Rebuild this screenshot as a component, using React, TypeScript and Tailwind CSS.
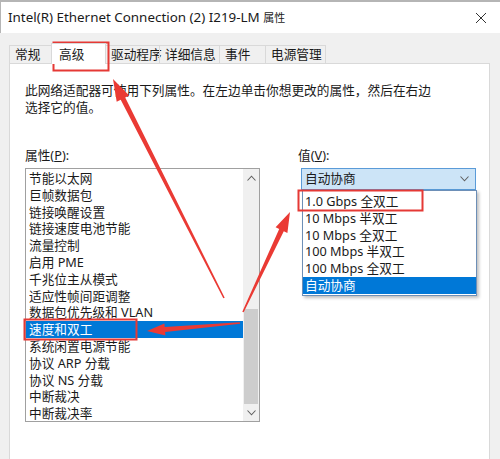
import React from 'react';

const font = { fontFamily: '"Noto Sans", "Noto Sans CJK SC", sans-serif' };

const tabs = [
  { label: '常规', w: 'w-[43px]' },
  { label: '高级', w: 'w-[55px]' },
  { label: '驱动程序', w: 'w-[55px]' },
  { label: '详细信息', w: 'w-[61px]' },
  { label: '事件', w: 'w-[47px]' },
  { label: '电源管理', w: 'w-[61px]' },
];

const properties = [
  '节能以太网',
  '巨帧数据包',
  '链接唤醒设置',
  '链接速度电池节能',
  '流量控制',
  '启用 PME',
  '千兆位主从模式',
  '适应性帧间距调整',
  '数据包优先级和 VLAN',
  '速度和双工',
  '系统闲置电源节能',
  '协议 ARP 分载',
  '协议 NS 分载',
  '中断裁决',
  '中断裁决率',
];

const values = ['1.0 Gbps 全双工', '10 Mbps 半双工', '10 Mbps 全双工', '100 Mbps 半双工', '100 Mbps 全双工', '自动协商'];

// tapered arrow from tail to tip
function arrow(tx: number, ty: number, hx: number, hy: number, w0: number, w1: number, hl: number, hw: number) {
  const dx = hx - tx;
  const dy = hy - ty;
  const len = Math.hypot(dx, dy);
  const ux = dx / len;
  const uy = dy / len;
  const nx = -uy;
  const ny = ux;
  const bx = hx - ux * hl;
  const by = hy - uy * hl;
  const p = (x: number, y: number) => `${x.toFixed(1)},${y.toFixed(1)}`;
  return [
    p(tx + (nx * w0) / 2, ty + (ny * w0) / 2),
    p(bx + (nx * w1) / 2, by + (ny * w1) / 2),
    p(bx + (nx * hw) / 2, by + (ny * hw) / 2),
    p(hx, hy),
    p(bx - (nx * hw) / 2, by - (ny * hw) / 2),
    p(bx - (nx * w1) / 2, by - (ny * w1) / 2),
    p(tx - (nx * w0) / 2, ty - (ny * w0) / 2),
  ].join(' ');
}

const Chevron: React.FC<{ up?: boolean }> = ({ up }) => (
  <svg width="9" height="6" viewBox="0 0 9 6" className="block">
    <path d={up ? 'M0.5 5.5 L4.5 1.2 L8.5 5.5' : 'M0.5 0.5 L4.5 4.8 L8.5 0.5'} fill="none" stroke="#606060" strokeWidth="1.1" />
  </svg>
);

export default function App() {
  return (
    <div className="relative w-[500px] h-[459px] overflow-hidden bg-[#f0f0f0] text-[#1a1a1a]" style={font}>
      {/* title bar */}
      <div className="h-[33px] bg-white border-t-2 border-l border-[#b5b5b5] flex items-center justify-between pl-[7px] pr-[13px]">
        <span className="text-[13.4px]">
          Intel(R) Ethernet Connection (2) I219-LM <span className="text-[11px]">属性</span>
        </span>
        <svg width="12" height="12" viewBox="0 0 12 12">
          <path d="M1 1 L11 11 M11 1 L1 11" stroke="#333" strokeWidth="1" />
        </svg>
      </div>

      {/* tabs */}
      <div className="flex items-end h-[30px] pl-[10px] text-[12.7px]">
        {tabs.map((t, i) =>
          i === 1 ? (
            <div key={t.label} className={`${t.w} h-[21px] pl-[7px] bg-white border border-b-0 border-[#d9d9d9] flex items-start pt-[1px] relative z-10 -mb-px -ml-px`}>
              {t.label}
            </div>
          ) : (
            <div key={t.label} className={`${t.w} h-[18px] pl-[5px] border border-b-0 border-[#d9d9d9] flex items-center -ml-px whitespace-nowrap`}>
              {t.label}
            </div>
          )
        )}
      </div>

      {/* panel */}
      <div className="ml-[9px] w-[481px] h-[400px] bg-white border border-[#d9d9d9] pl-[15px] pt-[18px] text-[12.7px]">
        <p className="leading-[17px] w-[410px]">此网络适配器可使用下列属性。在左边单击你想更改的属性，然后在右边选择它的值。</p>

        <div className="flex mt-[31px]">
          <div className="w-[235px]">
            <div className="leading-[17px] mb-[4px]">属性(<span className="underline">P</span>):</div>
            <div className="h-[254px] border border-[#a0a0a0] flex">
              <div className="flex-1 pt-[1px]">
                {properties.map((p, i) => (
                  <div key={p} className={`leading-[16.8px] pl-[3px] ${i === 9 ? 'bg-[#0078d7] text-white' : ''}`}>
                    {p}
                  </div>
                ))}
              </div>
              <div className="w-[16px] bg-[#f0f0f0] flex flex-col">
                <div className="h-[17px] flex items-center justify-center">
                  <Chevron up />
                </div>
                <div className="flex-1 flex flex-col justify-end">
                  <div className="h-[95px] mx-[1px] bg-[#cdcdcd]" />
                </div>
                <div className="h-[17px] flex items-center justify-center">
                  <Chevron />
                </div>
              </div>
            </div>
          </div>

          <div className="ml-[38px]">
            <div className="leading-[17px] mb-[4px]">值(<span className="underline">V</span>):</div>
            <div className="relative ml-[3px] w-[175px]">
              <div className="h-[22px] bg-[#cce4f7] border border-[#5a9bd8] flex items-center justify-between pl-[3px] pr-[6px]">
                <span>自动协商</span>
                <Chevron />
              </div>
              <div className="absolute top-[22px] left-[1px] w-[175px] bg-white border border-[#6d8fb7] pt-[2px] pb-[1px] shadow-[2px_2px_3px_rgba(0,0,0,0.25)]">
                {values.map((v, i) => (
                  <div key={v} className={`leading-[16.8px] pl-[2px] ${i === 5 ? 'bg-[#0078d7] text-white' : ''}`}>
                    {v}
                  </div>
                ))}
              </div>
            </div>
          </div>
        </div>
      </div>

      {/* annotations */}
      <svg className="absolute inset-0 pointer-events-none" width="500" height="459">
        <g fill="none" stroke="#e53935" strokeWidth="2">
          <rect x="53.5" y="42.5" width="55" height="28" />
          <rect x="24.5" y="319.5" width="112" height="20" />
          <rect x="298.5" y="190.5" width="124" height="20" />
        </g>
        <g fill="#ea3a34">
          <polygon points={arrow(224, 298, 113, 79, 1.5, 5, 22, 14)} />
          <polygon points={arrow(243, 312, 290, 212, 1.5, 5, 20, 13)} />
          <polygon points={arrow(240, 323, 147, 331, 1.5, 5, 18, 12)} />
        </g>
      </svg>
    </div>
  );
}
